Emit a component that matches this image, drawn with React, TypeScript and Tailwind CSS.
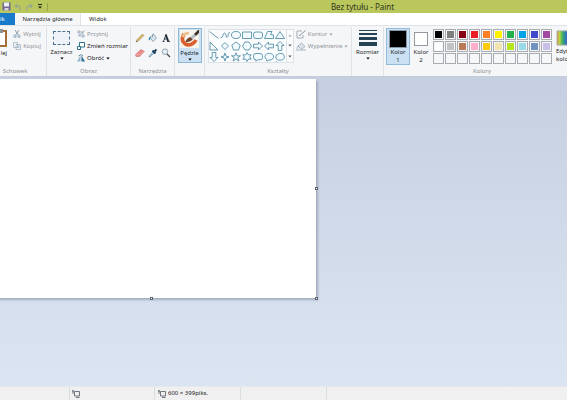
import React from 'react';

const palette = [
  ['#000000', '#7f7f7f', '#880015', '#ed1c24', '#ff7f27', '#fff200', '#22b14c', '#00a2e8', '#3f48cc', '#a349a4'],
  ['#ffffff', '#c3c3c3', '#b97a57', '#ffaec9', '#ffc90e', '#efe4b0', '#b5e61d', '#99d9ea', '#7092be', '#c8bfe7'],
  ['', '', '', '', '', '', '', '', '', ''],
];

// each outline is drawn on a 10x10 grid
const shapes = [
  { name: 'Linia', d: 'M.5 1.500 9.500 8.500' },
  { name: 'Krzywa', d: 'M.5 8C3.500 8 2.500 3 4.500 3S5.500 7.500 7 7.500 8 2 10 2' },
  { name: 'Owal', d: 'M.5 5a4.500 3.500 0 1 0 9 0a4.500 3.500 0 1 0-9 0' },
  { name: 'Prostokąt', d: 'M.5 2h9v6.500h-9z' },
  { name: 'Zaokrąglony prostokąt', d: 'M3 2h4q2.500 0 2.500 2v2.500q0 2-2.500 2H3Q.5 8.500.5 6.500V4q0-2 2.500-2z' },
  { name: 'Wielokąt', d: 'M3.500 1.500H8L6.500 4.500 9.500 5v3.500H.5z' },
  { name: 'Trójkąt', d: 'M5 1.500 9.500 8.500H.5z' },
  { name: 'Trójkąt prostokątny', d: 'M1 1v8h8z' },
  { name: 'Romb', d: 'M5 1.500 8.500 5 5 8.500 1.500 5z' },
  { name: 'Pięciokąt', d: 'M5 1 9.200 4.200 7.500 9h-5L.8 4.200z' },
  { name: 'Sześciokąt', d: 'M3 1h4L9.500 5 7 9H3L.5 5z' },
  { name: 'Strzałka w prawo', d: 'M.5 3.200h5V1L9.500 5 5.500 9V6.800h-5z' },
  { name: 'Strzałka w lewo', d: 'M9.500 3.200h-5V1L.5 5l4 4V6.800h5z' },
  { name: 'Strzałka w górę', d: 'M3.200 9.500v-5H1L5 .5l4 4H6.800v5z' },
  { name: 'Strzałka w dół', d: 'M3.200.5v5H1L5 9.500l4-4H6.800v-5z' },
  { name: 'Gwiazda czteroramienna', d: 'M5 1l1 3 3 1-3 1-1 3-1-3-3-1 3-1z' },
  { name: 'Gwiazda pięcioramienna', d: 'M5 .8l1.200 3h3.300L6.800 5.700 7.800 9 5 7 2.200 9l1-3.300L.5 3.800h3.300z' },
  { name: 'Gwiazda sześcioramienna', d: 'M5 .5l1.300 2.300H9.200L7.700 5 9.200 7.200H6.300L5 9.500 3.700 7.200H.8L2.300 5 .8 2.800h2.900z' },
  { name: 'Objaśnienie zaokrąglone', d: 'M3 1.500h4q2.500 0 2.500 2v2q0 2.300-2.500 2.300H4.500L3 9.300V7.800Q.5 7.800.5 5.500v-2q0-2 2.500-2z' },
  { name: 'Objaśnienie owalne', d: 'M2.800 9V7.500A4.400 3.400 0 1 1 5 8.100z' },
  { name: 'Objaśnienie w chmurce', d: 'M2.500 7.500Q.3 7 .8 5 .6 2.500 3 2.300 4 .7 6 1.500 8.500 1 9 3.500 10.200 5.500 8.500 7 7 8.800 5 8 3.500 9 2.500 7.500M1.500 9v.6' },
];

function Caret({ className = 'text-black' }: { className?: string }) {
  return (
    <svg viewBox="0 0 4 3" className={`h-[3px] w-1 shrink-0 ${className}`} aria-hidden="true">
      <path d="M.3.500h3.400L2 2.400z" fill="currentColor" />
    </svg>
  );
}

function Group({ label, className, children }: { label?: string; className: string; children: React.ReactNode }) {
  return (
    <section className={`flex shrink-0 flex-col border-r border-[#dfe3e8] ${className}`}>
      <div className="flex h-[39px] justify-center">{children}</div>
      <div className="text-center leading-[10px] text-[#8b8f95]">{label}</div>
    </section>
  );
}

function SmallButton({ icon, label, caret, muted }: { icon: React.ReactNode; label: string; caret?: boolean; muted?: boolean }) {
  return (
    <button className={`flex h-3 items-center gap-[2px] whitespace-nowrap ${muted ? 'text-[#91959a]' : 'text-[#15181c]'}`}>
      {icon}
      {label}
      {caret && <Caret className={muted ? 'text-[#9a9da1]' : 'text-black'} />}
    </button>
  );
}

function ScissorsIcon() {
  return (
    <svg viewBox="0 0 8 8" className="size-2" fill="none" stroke="#8ea3b8">
      <path d="M2 0 5.300 5M6 0 2.700 5" />
      <circle cx="2" cy="6.300" r="1.200" />
      <circle cx="6" cy="6.300" r="1.200" />
    </svg>
  );
}

function CopyIcon() {
  return (
    <svg viewBox="0 0 8 8" className="size-2" fill="#f4f6f9" stroke="#a3b3c5" strokeWidth=".8">
      <path d="M.5.500h4v5h-4zM3 2.500h4.500v5H3zM4 4h2.500M4 5.500h2.500" />
    </svg>
  );
}

function CropIcon() {
  return (
    <svg viewBox="0 0 8 8" className="size-2" fill="none" stroke="#9fb0c2">
      <path d="M2 0v6h6M0 2h6v6M2 6 7.500.500" />
    </svg>
  );
}

function ResizeIcon() {
  return (
    <svg viewBox="0 0 8 8" className="size-2" fill="#fff" stroke="#2e7386">
      <path d="M2.500.500h5v4.500h-5z" />
      <path d="M.5 4.500h3v3h-3z" />
    </svg>
  );
}

function RotateIcon() {
  return (
    <svg viewBox="0 0 8 8" className="size-2">
      <path d="M3.500 1.500V7.500H0z" fill="#91b5cd" />
      <path d="M4.500 1.500V7.500H8z" fill="#286d93" />
      <path d="M1.500 2Q4-.8 6 2" stroke="#3d7190" fill="none" strokeWidth=".8" />
    </svg>
  );
}

function PencilIcon() {
  return (
    <svg viewBox="0 0 10 10" className="size-[10px]">
      <path d="M1 9 2 6.500 7.500 1 9 2.500 3.500 8z" fill="#d8b66e" stroke="#8f7540" strokeWidth=".4" />
      <path d="M1 9l.4-1.200.8.8z" fill="#333" />
    </svg>
  );
}

function BucketIcon() {
  return (
    <svg viewBox="0 0 10 10" className="size-[10px]">
      <path d="M2 4.500 5.500 1.500 8.500 5 5 8.500z" fill="#dce6ee" stroke="#71889c" strokeWidth=".7" />
      <path d="M4.500 4.500V1.500Q5.500 0 6 2" stroke="#71889c" fill="none" strokeWidth=".6" />
      <path d="M3 3.700Q.3 4 .8 7 2 8 2.200 5.500z" fill="#2b83bb" />
    </svg>
  );
}

function EraserIcon() {
  return (
    <svg viewBox="0 0 10 10" className="size-[10px]">
      <path d="M.5 6.500 6 1.500l3.500 2L4.500 8.500 1 8.500z" fill="#e98c89" stroke="#bd6462" strokeWidth=".5" />
      <path d="M.8 6.300l3.400.5L9.300 3.500" fill="none" stroke="#f8c5c2" strokeWidth=".6" />
    </svg>
  );
}

function PickerIcon() {
  return (
    <svg viewBox="0 0 10 10" className="size-[10px]">
      <path d="M1 9 1.500 7.500l4-4 1 1-4 4z" fill="#b9d6ea" stroke="#4c7898" strokeWidth=".6" />
      <path d="M4.500 2.500 7.500 5.500M6.300 3.700 8.500 1.500" stroke="#183b5c" strokeWidth="1.900" />
    </svg>
  );
}

function MagnifierIcon() {
  return (
    <svg viewBox="0 0 10 10" className="size-[10px]">
      <circle cx="4" cy="3.700" r="2.800" fill="#e3eef6" stroke="#8492a0" strokeWidth=".8" />
      <path d="M6 6l3 3" stroke="#4f443b" strokeWidth="1.300" />
    </svg>
  );
}

function LetterIcon() {
  return (
    <svg viewBox="0 0 10 10" className="size-[10px]" fill="none" stroke="#202f3c">
      <path d="M2.500 8.500 5 1.500" strokeWidth=".9" />
      <path d="M4.700 1.500 7.300 8.500" strokeWidth="1.900" />
      <path d="M3.300 6h3M1.500 8.500h2M6 8.500h3" strokeWidth=".8" />
    </svg>
  );
}

function BrushIcon() {
  return (
    <svg viewBox="0 0 19 18" className="h-[18px] w-[19px]">
      <path d="M0 0h19v18H0z" fill="#f7f3ed" />
      <path d="M4 4Q1.500 8 3 11.500 6 16 11 14.500 14.500 13 16 10" fill="none" stroke="#d95f2d" strokeWidth="3.600" />
      <path d="M2.500 7Q4 3 9 3" fill="none" stroke="#ecc08a" strokeWidth="2.500" />
      <path d="M5.500 12Q6.500 8 10.500 7L13 9Q10.500 12.500 5.500 12z" fill="#6d4329" />
      <path d="M10.500 7 14 4l2 2-3.500 3.500z" fill="#b5bec5" />
      <path d="M14 4 18 0h1v3l-3 3z" fill="#43342b" />
    </svg>
  );
}

function SizeIcon() {
  return (
    <svg viewBox="0 0 18 16" className="h-4 w-[18px]" fill="#254353">
      <path d="M0 0h18v1H0zM0 3h18v2H0zM0 7h18v3H0zM0 12h18v4H0z" />
    </svg>
  );
}

function ScreenIcon() {
  return (
    <svg viewBox="0 0 8 8" className="size-2" fill="none" stroke="#4e5a66" strokeWidth=".8">
      <path d="M2.500 1.500h5v4.500h-5zM0 1h2M1 0v4M4 7.500h3.500" />
    </svg>
  );
}

function ColorSlot({ color, label, active }: { color: string; label: string; active?: boolean }) {
  return (
    <button
      className={`mt-px flex h-[37px] flex-col items-center border pt-px ${
        active ? 'w-6 border-[#92bad9] bg-[#cbe1f3]' : 'w-[22px] border-transparent'
      }`}
    >
      <span className={`flex size-[18px] items-center justify-center ${active ? '' : 'p-[2px]'}`}>
        <span className={`size-full border ${active ? 'border-[#8399aa]' : 'border-[#93999f]'}`} style={{ background: color }} />
      </span>
      <span className="leading-[9px]">Kolor</span>
      <span className="leading-[6px]">{label}</span>
    </button>
  );
}

function TitleBar() {
  return (
    <header className="flex h-[13px] shrink-0 items-center bg-[#bac75d] pl-[2px]">
      <div className="flex items-center gap-[3px]">
        <button aria-label="Zapisz">
          <svg viewBox="0 0 9 9" className="size-[9px]">
            <path d="M.5.500h8v8h-8z" fill="#74658e" />
            <path d="M2 .5h5v4H2z" fill="#eef0f7" />
            <path d="M2.500 6h4v2.500h-4z" fill="#d5d3dc" />
          </svg>
        </button>
        <button aria-label="Cofnij">
          <svg viewBox="0 0 8 8" className="size-2" fill="none" stroke="#9aaa8a" strokeWidth="1.300">
            <path d="M1 3h3.500Q7 3 6 7.500M3 1 1 3l2 2" />
          </svg>
        </button>
        <button aria-label="Ponów">
          <svg viewBox="0 0 8 8" className="size-2" fill="none" stroke="#9aaa8a" strokeWidth="1.300">
            <path d="M7 3H3.500Q1 3 2 7.500M5 1l2 2-2 2" />
          </svg>
        </button>
        <button aria-label="Dostosuj pasek" className="px-[2px]">
          <svg viewBox="0 0 4 5" className="h-[5px] w-1" fill="#20240e">
            <path d="M0 0h4v1H0zM0 2.500h4L2 4.500z" />
          </svg>
        </button>
        <span className="h-2 w-px bg-[#98a44c]" />
      </div>
      <h1 className="flex-1 pl-[110px] text-center text-[8px] leading-[13px] text-[#30351b]">Bez tytułu - Paint</h1>
    </header>
  );
}

function Tabs() {
  return (
    <nav className="flex h-3 shrink-0 bg-white leading-[13px]">
      <button className="w-[15px] bg-[#1979ca] text-left text-white">ik</button>
      <button className="w-[66px] border-r border-[#dfe3e8] bg-[#f5f6f7] text-center text-[#24282d]">Narzędzia główne</button>
      <button className="px-2 text-[#24282d]">Widok</button>
    </nav>
  );
}

function Ribbon() {
  return (
    <div className="flex h-[52px] shrink-0 overflow-hidden border-t border-b border-t-[#dfe3e8] border-b-[#c5ccd8] bg-[#f5f6f7] pt-px">
      <Group label="Schowek" className="-ml-[16px] w-[63px]">
        <div className="flex w-full justify-end gap-[6px] pr-[5px]">
          <button className="flex flex-col items-end pt-[2px]">
            <svg viewBox="0 0 14 18" className="h-[18px] w-[14px]">
              <path d="M1 2h12v15H1z" fill="#fff" stroke="#a56f38" strokeWidth="2" />
              <path d="M4 0h6v4H4z" fill="#8b929a" />
            </svg>
            <span className="mt-[2px] leading-[9px]">lej</span>
          </button>
          <div className="pt-px">
            <SmallButton icon={<ScissorsIcon />} label="Wytnij" muted />
            <SmallButton icon={<CopyIcon />} label="Kopiuj" muted />
          </div>
        </div>
      </Group>

      <Group label="Obraz" className="w-[84px]">
        <button className="flex w-[25px] flex-col items-center pt-1">
          <span className="h-[14px] w-[17px] border border-dashed border-[#496f91] bg-[#edf3f8]" />
          <span className="mt-[3px] leading-[9px]">Zaznacz</span>
          <Caret />
        </button>
        <div className="pt-px pl-[3px]">
          <SmallButton icon={<CropIcon />} label="Przytnij" muted />
          <SmallButton icon={<ResizeIcon />} label="Zmień rozmiar" />
          <SmallButton icon={<RotateIcon />} label="Obróć" caret />
        </div>
      </Group>

      <Group label="Narzędzia" className="w-11">
        <div className="grid grid-cols-3 content-start gap-x-[3px] gap-y-[5px] pt-[6px]">
          <button aria-label="Ołówek"><PencilIcon /></button>
          <button aria-label="Wypełnienie kolorem"><BucketIcon /></button>
          <button aria-label="Tekst"><LetterIcon /></button>
          <button aria-label="Gumka"><EraserIcon /></button>
          <button aria-label="Selektor kolorów"><PickerIcon /></button>
          <button aria-label="Lupa"><MagnifierIcon /></button>
        </div>
      </Group>

      <Group className="w-[30px]">
        <button className="mt-px flex h-[35px] w-6 flex-col items-center border border-[#8eb6d5] bg-[#cbe1f3] pt-px">
          <BrushIcon />
          <span className="mt-px leading-[9px]">Pędzle</span>
          <Caret />
        </button>
      </Group>

      <Group label="Kształty" className="w-[147px]">
        <div className="mt-[2px] flex h-[34px] border border-[#dce1e7] bg-[#fafcfd]">
          <div className="grid grid-cols-7 content-center">
            {shapes.map((shape) => (
              <button key={shape.name} aria-label={shape.name} className="h-[11px] w-[11px]">
                <svg viewBox="0 0 10 10" className="size-[10px]" fill="#f3fafd" stroke="#44849d" strokeWidth=".8">
                  <path d={shape.d} />
                </svg>
              </button>
            ))}
          </div>
          <div className="flex w-[7px] flex-col items-center justify-around border-l border-[#dce1e7]">
            <Caret className="rotate-180 text-[#a5a9ae]" />
            <Caret className="text-[#53585e]" />
            <Caret className="text-[#53585e]" />
          </div>
        </div>
        <div className="pt-px pl-[2px]">
          <SmallButton
            icon={
              <svg viewBox="0 0 10 9" className="h-[9px] w-[10px]" fill="none" stroke="#a2acb7">
                <path d="M6 1H1v7h6V5" />
                <path d="M3 6 9.500.500" stroke="#83909f" />
              </svg>
            }
            label="Kontur"
            caret
            muted
          />
          <SmallButton
            icon={
              <svg viewBox="0 0 10 9" className="h-[9px] w-[10px]" fill="#dbe2e9" stroke="#98a8b8" strokeWidth=".8">
                <path d="M2 4l3.500-3L9 4.500 5.500 7.500z" />
                <path d="M0 8h10M2 4 1 7" />
              </svg>
            }
            label="Wypełnienie"
            caret
            muted
          />
        </div>
      </Group>

      <Group className="w-8">
        <button className="flex flex-col items-center pt-[3px]">
          <SizeIcon />
          <span className="mt-[2px] leading-[9px]">Rozmiar</span>
          <Caret />
        </button>
      </Group>

      <Group label="Kolory" className="w-[197px]">
        <div className="flex w-full pl-[2px]">
          <ColorSlot color="#000000" label="1" active />
          <ColorSlot color="#ffffff" label="2" />
          <div className="grid grid-cols-10 content-start gap-px pt-[2px] pl-px">
            {palette.flat().map((color, index) => (
              <button
                key={index}
                aria-label={color || 'Pusty kolor'}
                className="size-[11px] border border-[#a9adb3] p-px"
              >
                <span className="block size-full" style={{ background: color || '#f5f6f7' }} />
              </button>
            ))}
          </div>
          <button className="flex flex-col items-start pt-[3px] pl-1">
            <svg viewBox="0 0 18 18" className="h-4 w-[18px]" preserveAspectRatio="none">
              <defs>
                <linearGradient id="spectrum">
                  <stop offset="0" stopColor="#d9853f" />
                  <stop offset=".15" stopColor="#b9d747" />
                  <stop offset=".35" stopColor="#40ad61" />
                  <stop offset=".55" stopColor="#2c77bd" />
                  <stop offset="1" stopColor="#b13c9b" />
                </linearGradient>
              </defs>
              <path d="M1 1h16v16H1z" fill="url(#spectrum)" stroke="#a9adb3" />
            </svg>
            <span className="mt-px leading-[8px]">Edyt</span>
            <span className="leading-[8px]">kolo</span>
          </button>
        </div>
      </Group>
    </div>
  );
}

function Handle({ className }: { className: string }) {
  return <span className={`absolute size-[3px] border border-[#59616c] bg-white ${className}`} />;
}

function StatusBar() {
  return (
    <footer className="flex h-[14px] shrink-0 border-t border-[#e5e8ec] bg-[#f0f0f0] text-[#1d2024]">
      <div className="w-[70px] border-r border-[#d9dce0]" />
      <div className="flex w-[85px] items-center border-r border-[#d9dce0] pl-[2px]">
        <ScreenIcon />
      </div>
      <div className="flex w-[86px] items-center gap-[2px] border-r border-[#d9dce0] pl-[3px]">
        <ScreenIcon />
        600 × 399piks.
      </div>
      <div className="w-[86px] border-r border-[#d9dce0]" />
    </footer>
  );
}

export default function App() {
  return (
    <div className="flex min-h-screen flex-col overflow-hidden bg-[#f5f6f7] font-['Noto_Sans','Open_Sans',sans-serif] text-[6px] text-[#24282d]">
      <TitleBar />
      <Tabs />
      <Ribbon />
      <main className="flex-1 bg-linear-to-b from-[#c6cfe1] to-[#dbe5f2] pt-[2px]">
        <div className="relative -ml-1 h-[219px] w-[320px] bg-white shadow-[2px_2px_2px_#a5aec0]">
          <Handle className="top-[108px] -right-[2px]" />
          <Handle className="-right-[2px] -bottom-[2px]" />
          <Handle className="-bottom-[2px] left-[154px]" />
        </div>
      </main>
      <StatusBar />
    </div>
  );
}
